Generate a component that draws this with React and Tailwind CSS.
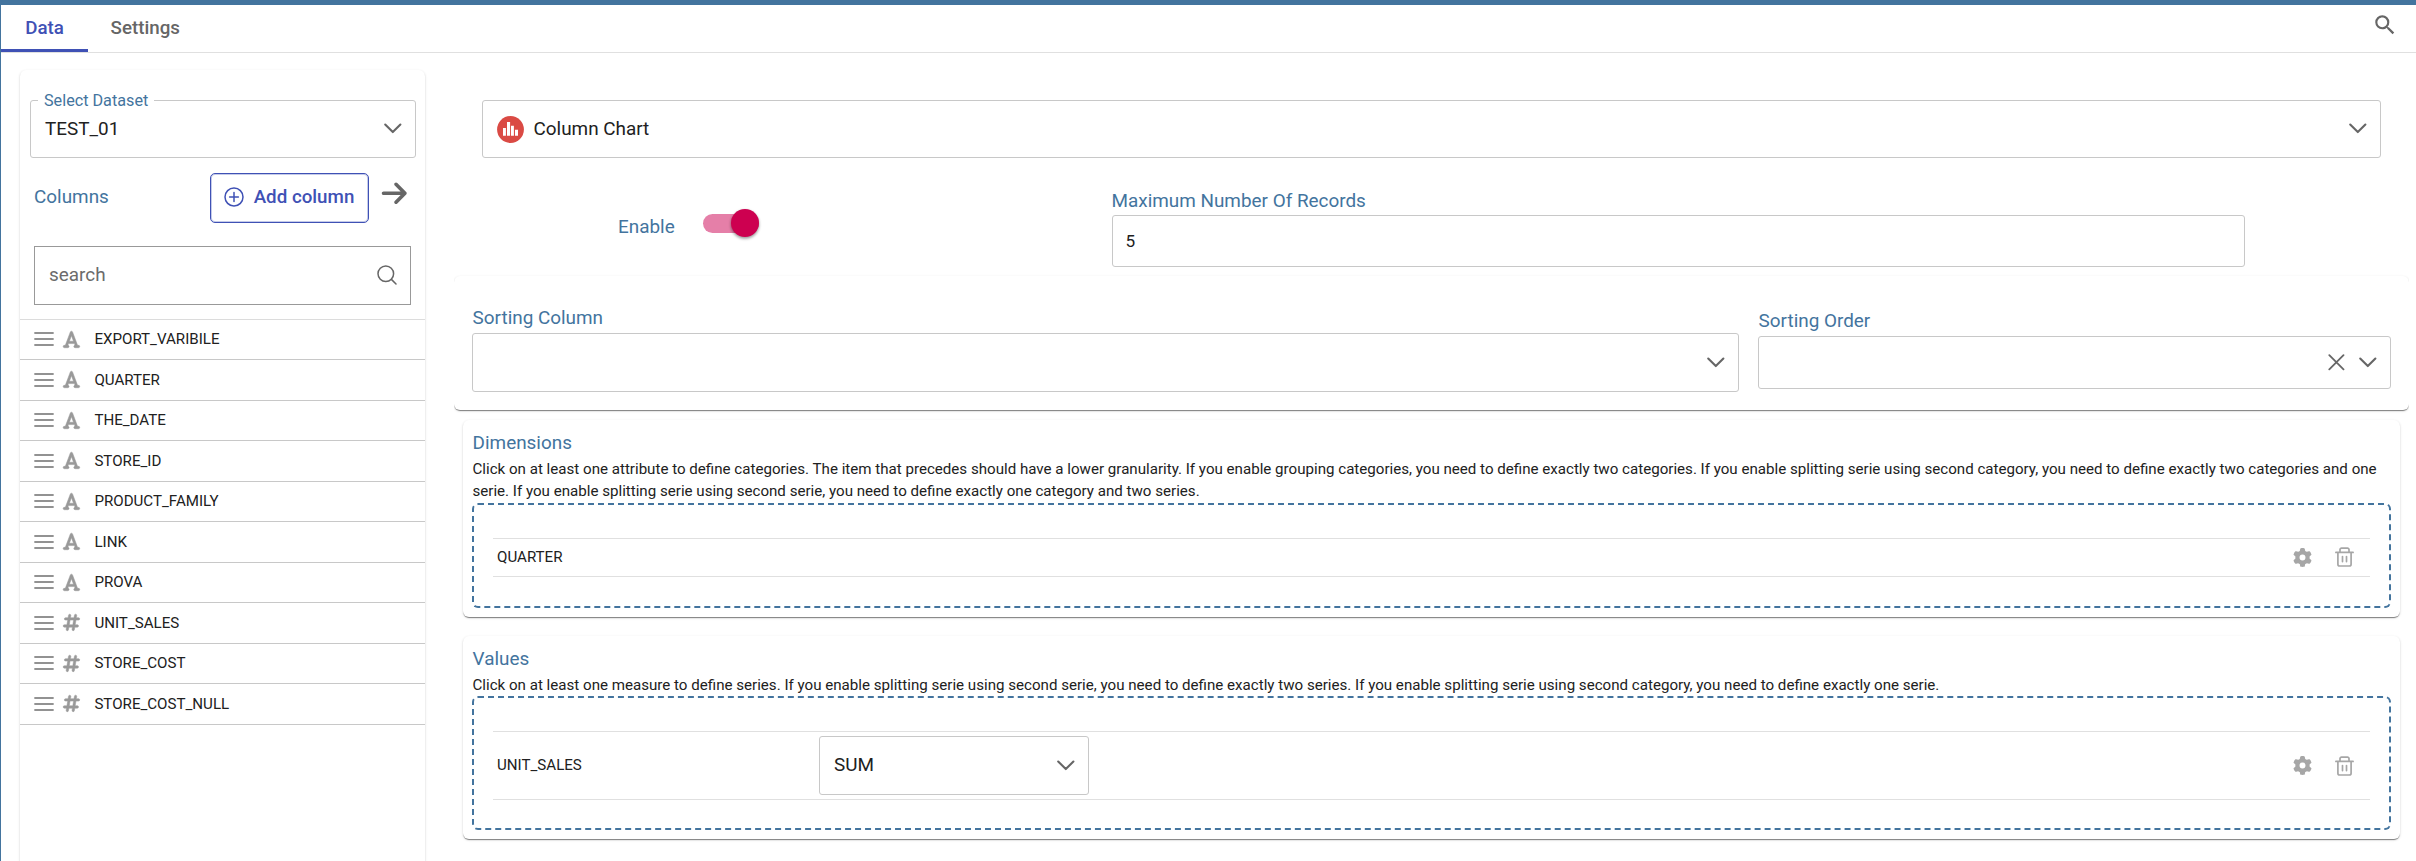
import { FaArrowRight, FaFont, FaGear, FaHashtag } from "react-icons/fa6";
import { MdSearch } from "react-icons/md";

const COLUMNS = [
  { name: "EXPORT_VARIBILE", type: "text" },
  { name: "QUARTER", type: "text" },
  { name: "THE_DATE", type: "text" },
  { name: "STORE_ID", type: "text" },
  { name: "PRODUCT_FAMILY", type: "text" },
  { name: "LINK", type: "text" },
  { name: "PROVA", type: "text" },
  { name: "UNIT_SALES", type: "number" },
  { name: "STORE_COST", type: "number" },
  { name: "STORE_COST_NULL", type: "number" },
];

const CARD =
  "rounded-[6px] bg-white shadow-[0_2px_1px_-1px_rgba(0,0,0,0.3),0_1px_1px_0_rgba(0,0,0,0.22),0_1px_3px_0_rgba(0,0,0,0.12)]";
const FIELD = "flex items-center rounded-[3px] border border-[#c8c8c8] bg-white";
const LABEL = "block pl-[0.6px] text-[18.9px] leading-6 text-[#43749e]";

function Chevron() {
  return (
    <svg width="20" height="20" viewBox="0 0 20 20" fill="none" stroke="#666" strokeWidth="2.1" strokeLinecap="round" strokeLinejoin="round">
      <path d="M2.2 5.5 9.8 13.1 17.4 5.5" />
    </svg>
  );
}

function Cross() {
  return (
    <svg width="18" height="18" viewBox="0 0 18 18" fill="none" stroke="#666" strokeWidth="1.8" strokeLinecap="round">
      <path d="M1.3 1.2 15.5 15.4M15.5 1.2 1.3 15.4" />
    </svg>
  );
}

function PlusCircle() {
  return (
    <svg width="20" height="20" viewBox="0 0 20 20" fill="none" stroke="currentColor" strokeWidth="1.5" strokeLinecap="round">
      <circle cx="10" cy="10" r="9" />
      <path d="M10 5.6v8.8M5.6 10h8.8" />
    </svg>
  );
}

function SearchGlyph() {
  return (
    <svg width="20" height="20" viewBox="0 0 20 20" fill="none" stroke="#666" strokeWidth="1.5" strokeLinecap="round">
      <circle cx="8.8" cy="8.8" r="7.8" />
      <path d="M14.4 14.4 19 19" />
    </svg>
  );
}

function DragHandle() {
  return (
    <svg width="20" height="14" viewBox="0 0 20 14" fill="none" stroke="#929292" strokeWidth="1.8" strokeLinecap="round">
      <path d="M1 1h18M1 7h18M1 13h18" />
    </svg>
  );
}

function Trash() {
  return (
    <svg width="19" height="20" viewBox="0 0 19 20" fill="none" stroke="#a6a6a6" strokeWidth="1.7" strokeLinecap="round" strokeLinejoin="round">
      <path d="M.9 5.4h17.2M5 5.2V2.6A1.5 1.5 0 0 1 6.5 1.1h6A1.5 1.5 0 0 1 14 2.6v2.6M2.9 5.6v11.6a1.8 1.8 0 0 0 1.8 1.8h9.6a1.8 1.8 0 0 0 1.8-1.8V5.6M7.5 9.6v5M11.5 9.6v5" />
    </svg>
  );
}

function ColumnChartIcon() {
  return (
    <svg width="27" height="27" viewBox="0 0 27 27">
      <circle cx="13.5" cy="13.5" r="13.4" fill="#da4a44" />
      <path fill="#fff" d="M6 12h2.9v7.7H6zM10 6.1h3.1v13.6H10zM14 9.8h2.9v9.9H14zM18 13.7h3v6h-3z" />
    </svg>
  );
}

function RowActions() {
  return (
    <div className="ml-auto flex items-center gap-[23.5px] pr-[16px]">
      <FaGear className="text-[#a6a6a6]" size={19} />
      <Trash />
    </div>
  );
}

function Sidebar() {
  return (
    <aside className={`mt-[17px] ml-[19px] h-[830px] w-[405px] shrink-0 ${CARD}`}>
      <div className={`relative mt-[30px] ml-[10px] h-[58px] w-[386px] pr-[12.5px] pl-[14px] ${FIELD}`}>
        <span className="absolute -top-[12px] left-[7px] bg-white px-[6px] text-[16.2px] leading-6 text-[#43749e]">
          Select Dataset
        </span>
        <span className="-mt-[1px] text-[18.9px] leading-6 text-[#212121]">TEST_01</span>
        <span className="ml-auto">
          <Chevron />
        </span>
      </div>

      <div className="mt-[15px] flex h-[50px] items-start pl-[14px]">
        <span className="mt-[12px] text-[18.9px] leading-6 text-[#43749e]">Columns</span>
        <button className="ml-auto flex h-[50px] w-[159px] items-start rounded-[5px] border border-[#3f51b5] pt-[11px] pl-[13px] text-[#3f51b5] shadow-[inset_0_0_0_1px_#c5cbe9]">
          <span className="mt-[2px]">
            <PlusCircle />
          </span>
          <span className="ml-[9.7px] text-[18.75px] leading-6 font-medium">Add column</span>
        </button>
        <FaArrowRight className="mt-[6px] mr-[17px] ml-[10.5px] text-[#666]" size={28.5} />
      </div>

      <div className="mt-[23px] ml-[14px] flex h-[59px] w-[377px] items-center border border-[#999] pr-[13px] pl-[14px]">
        <span className="-mt-[1px] text-[18.9px] leading-6 text-[#6b6b6b]">search</span>
        <span className="ml-auto -mt-[1px]">
          <SearchGlyph />
        </span>
      </div>

      <ul className="mt-[13.5px] border-t border-[#dcdcdc]">
        {COLUMNS.map((c) => (
          <li key={c.name} className="flex h-[40.5px] items-center border-b border-[#c8c8c8] pl-[14px]">
            <DragHandle />
            <span className="ml-[8px] text-[#999]">
              {c.type === "text" ? (
                <FaFont className="stroke-[#999] [stroke-width:14px]" size={18.9} />
              ) : (
                <FaHashtag className="stroke-[#999] [stroke-width:14px]" size={18.9} />
              )}
            </span>
            <span className="ml-[13.5px] text-[15.12px] leading-5 text-[#212121]">{c.name}</span>
          </li>
        ))}
      </ul>
    </aside>
  );
}

function Header() {
  return (
    <header className="flex h-[48px] items-start border-b border-b-[#e0e0e0]">
      <button className="flex h-[47px] w-[87px] items-start justify-center border-b-3 border-[#3f51b5] pt-[10.6px] text-[18.75px] leading-6 font-medium text-[#3f51b5]">
        Data
      </button>
      <button className="ml-[22.6px] pt-[10.6px] text-[18.75px] leading-6 font-medium text-[#666]">Settings</button>
      <MdSearch className="mt-[7px] mr-[18px] ml-auto text-[#666]" size={26} />
    </header>
  );
}

function RecordLimit() {
  return (
    <div className="flex h-[118px] items-start pl-[193px]">
      <span className="mt-[57px] w-[85px] text-[18.9px] leading-6 text-[#43749e]">Enable</span>
      <div className="mt-[55.5px] flex h-[19px] w-[55.5px] items-center justify-end rounded-full bg-[#e57fa8]">
        <div className="h-7 w-7 shrink-0 rounded-full bg-[#cd0050] shadow-[0_2px_3px_rgba(0,0,0,0.25),0_1px_3px_rgba(0,0,0,0.2)]" />
      </div>
      <div className="mt-[31px] ml-[353.5px] w-[1133px]">
        <label className="-ml-[0.5px] block text-[18.9px] leading-6 text-[#43749e]">Maximum Number Of Records</label>
        <div className={`mt-[2px] h-[52px] pt-px pl-[12.5px] text-[17.2px] text-[#212121] ${FIELD}`}>5</div>
      </div>
    </div>
  );
}

function Sorting() {
  return (
    <section
      className={`ml-[29px] flex h-[134px] w-[1955px] items-start pt-[30px] pl-[18px] [clip-path:inset(-5px_0_-5px_0)] ${CARD}`}
    >
      <div className="w-[1267px]">
        <label className={LABEL}>Sorting Column</label>
        <div className={`mt-[3px] h-[59px] justify-end pr-[12.5px] ${FIELD}`}>
          <Chevron />
        </div>
      </div>
      <div className="mt-[3px] ml-[19px] w-[633px]">
        <label className={LABEL}>Sorting Order</label>
        <div className={`mt-[3px] h-[53px] justify-end gap-[12px] pr-[12.5px] ${FIELD}`}>
          <Cross />
          <Chevron />
        </div>
      </div>
    </section>
  );
}

function DropSection({ title, hint, children, className }) {
  return (
    <section className={`ml-[38px] w-[1937px] pt-[11px] pr-[9px] pl-[9px] ${CARD} ${className}`}>
      <h2 className={LABEL}>{title}</h2>
      <p className="mt-[3px] pl-[0.5px] text-[15.12px] leading-[22.3px] text-[#212121]">{hint}</p>
      {children}
    </section>
  );
}

const DROP_ZONE = "rounded-[6px] border-2 border-dashed border-[#43749e] pr-[19px] pl-[19px] pt-[33px]";
const DROP_ROW = "flex items-center border-y border-[#e0e0e0] pl-[4px] text-[15.12px] leading-5 text-[#212121]";

export default function App() {
  return (
    <div className="h-[861px] w-[2416px] overflow-hidden bg-white font-[Roboto,sans-serif]">
      <div className="h-[5px] bg-[#43749e]" />
      <div className="border-l border-[#43749e]">
        <Header />
        <div className="flex h-[808px]">
          <Sidebar />
          <main className="flex min-w-0 flex-1 flex-col">
            <div className={`mt-[47px] ml-[57px] h-[58px] w-[1899px] shrink-0 pr-[12px] pl-[14px] ${FIELD}`}>
              <ColumnChartIcon />
              <span className="-mt-[1px] ml-[9.5px] text-[18.9px] leading-6 text-[#212121]">Column Chart</span>
              <span className="ml-auto">
                <Chevron />
              </span>
            </div>

            <RecordLimit />
            <Sorting />

            <DropSection
              title="Dimensions"
              hint="Click on at least one attribute to define categories. The item that precedes should have a lower granularity. If you enable grouping categories, you need to define exactly two categories. If you enable splitting serie using second category, you need to define exactly two categories and one serie. If you enable splitting serie using second serie, you need to define exactly one category and two series."
              className="mt-[10px] h-[197px]"
            >
              <div className={`mt-[0.4px] h-[105px] ${DROP_ZONE}`}>
                <div className={`h-[39px] ${DROP_ROW}`}>
                  <span>QUARTER</span>
                  <RowActions />
                </div>
              </div>
            </DropSection>

            <DropSection
              title="Values"
              hint="Click on at least one measure to define series. If you enable splitting serie using second serie, you need to define exactly two series. If you enable splitting serie using second category, you need to define exactly one serie."
              className="mt-[19px] h-[203px]"
            >
              <div className={`h-[134px] ${DROP_ZONE}`}>
                <div className={`h-[69px] ${DROP_ROW}`}>
                  <span className="-mt-px w-[322px]">UNIT_SALES</span>
                  <div className={`h-[59px] w-[270px] pr-[12.5px] pl-[14px] ${FIELD}`}>
                    <span className="-mt-[2px] text-[18.9px] leading-6">SUM</span>
                    <span className="ml-auto">
                      <Chevron />
                    </span>
                  </div>
                  <RowActions />
                </div>
              </div>
            </DropSection>
          </main>
        </div>
      </div>
    </div>
  );
}
